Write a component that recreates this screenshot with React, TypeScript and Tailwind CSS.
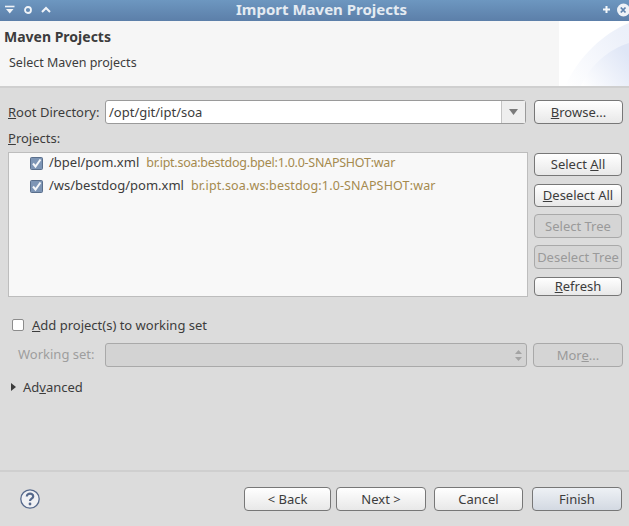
const font = "[font-family:'Noto_Sans',sans-serif]";

function Btn({ children, disabled, primary, className = "" }: { children: React.ReactNode; disabled?: boolean; primary?: boolean; className?: string }) {
  const look = disabled
    ? "border-[#a9a9a9] bg-[#d5d5d5] text-[#9a9a9a]"
    : primary
      ? "border-[#777] bg-gradient-to-b from-[#eef1f5] to-[#d3d9e2] text-[#3c3c3c]"
      : "border-[#777] bg-gradient-to-b from-white to-[#e8e8e8] text-[#3c3c3c]";
  return (
    <div className={`flex items-center justify-center rounded-[4px] border text-[13px] leading-none whitespace-nowrap ${look} ${className}`}>
      {children}
    </div>
  );
}

function Check() {
  return (
    <svg width="13" height="13" viewBox="0 0 13 13" className="shrink-0">
      <rect x="0.5" y="0.5" width="12" height="12" rx="1" fill="#7d95b5" stroke="#5a6f8c" />
      <path d="M3 6.5 L5.5 9.5 L10.5 2.5" fill="none" stroke="#f4f6f9" strokeWidth="2" />
    </svg>
  );
}

function ProjectRow({ path, id, idClass }: { path: string; id: string; idClass: string }) {
  return (
    <div className="flex h-[20px] items-center pl-[21px]">
      <Check />
      <span className="ml-[6px] text-[13px] text-[#3c3c3c]">{path}</span>
      <span className={`ml-[7px] text-[12.5px] text-[#a58a4e] ${idClass}`}>{id}</span>
    </div>
  );
}

export default function App() {
  return (
    <div className={`flex h-[526px] w-[629px] flex-col overflow-hidden bg-[#dcdcdc] ${font} text-[#3c3c3c]`}>
      {/* Title bar */}
      <div className="flex h-[21px] shrink-0 items-center bg-gradient-to-b from-[#6d97c0] to-[#5c7fa9] pb-[2px] pl-[5px]">
        <div className="flex items-center gap-[8px]">
          <svg width="10" height="10" viewBox="0 0 10 10"><path d="M0 1.5H9.5" stroke="#f0f4f8" strokeWidth="1.6" /><path d="M1 4 H8.5 L4.75 8.5Z" fill="#f0f4f8" /></svg>
          <svg width="10" height="10" viewBox="0 0 10 10"><circle cx="5" cy="5" r="3" fill="none" stroke="#f0f4f8" strokeWidth="1.8" /></svg>
          <svg width="10" height="10" viewBox="0 0 10 10"><path d="M1 7 L5 3 L9 7" fill="none" stroke="#f0f4f8" strokeWidth="2" /></svg>
        </div>
        <span className="ml-[185px] text-[15px] font-bold text-[#e4ebf2]">Import Maven Projects</span>
        <div className="ml-auto flex items-center gap-[6px]">
          <svg width="9" height="9" viewBox="0 0 9 9"><path d="M4.5 1V8M1 4.5H8" stroke="#f4f7fa" strokeWidth="2" /></svg>
          <svg width="12" height="14" viewBox="0 0 12 14"><circle cx="6.5" cy="7" r="6.5" fill="#eef2f7" /><path d="M3.8 4.5 L8.5 9.5 M8.5 4.5 L3.8 9.5" stroke="#5f83ad" strokeWidth="1.8" /></svg>
        </div>
      </div>

      {/* Wizard header */}
      <div className="flex h-[67px] shrink-0 border-b-2 border-[#cfcfcf] bg-[#f6f6f6]">
        <div className="flex-1 pl-[4px]">
          <div className="mt-[7px] text-[14px] font-bold leading-[18px] text-[#3c3c3c]">Maven Projects</div>
          <div className="mt-[8px] pl-[5px] text-[12.5px] leading-[18px]">Select Maven projects</div>
        </div>
        <svg width="70" height="65" viewBox="0 0 70 65" className="shrink-0 bg-white">
          <defs>
            <linearGradient id="w" x1="0" y1="1" x2="1" y2="0.3">
              <stop offset="0" stopColor="#ffffff" />
              <stop offset="1" stopColor="#dfe6f6" />
            </linearGradient>
          </defs>
          <path d="M6 65 C20 35 45 12 70 2 V65Z" fill="url(#w)" opacity="0.6" />
          <path d="M22 65 C30 45 50 28 70 22 V65Z" fill="url(#w)" />
        </svg>
      </div>

      {/* Root directory */}
      <div className="mt-[12px] flex h-[24px] shrink-0 items-center pl-[8px] pr-[6px]">
        <span className="w-[97px] pt-[2px] text-[13px]"><span className="underline">R</span>oot Directory:</span>
        <div className="flex h-full w-[421px] rounded-[3px] border border-[#9a9a9a] bg-white">
          <div className="flex flex-1 items-center pl-[3px] pt-[2px] text-[13px]">/opt/git/ipt/soa</div>
          <div className="flex w-[24px] items-center justify-center border-l border-[#c4c4c4] bg-[#eeeeee]">
            <svg width="9" height="6" viewBox="0 0 9 6"><path d="M0 0H9L4.5 6Z" fill="#7a7a7a" /></svg>
          </div>
        </div>
        <Btn className="ml-[8px] h-full w-[89px]"><span><span className="underline">B</span>rowse...</span></Btn>
      </div>

      <div className="mt-[4px] h-[20px] shrink-0 pl-[8px] text-[13px] leading-[20px]"><span className="underline">P</span>rojects:</div>

      {/* Projects */}
      <div className="mt-[4px] flex h-[145px] shrink-0 pl-[8px] pr-[6px]">
        <div className="flex h-full w-[520px] flex-col gap-[3px] border border-[#bdbdbd] bg-[#f8f8f8]">
          <ProjectRow path="/bpel/pom.xml" id="br.ipt.soa:bestdog.bpel:1.0.0-SNAPSHOT:war" idClass="tracking-[-0.25px]" />
          <ProjectRow path="/ws/bestdog/pom.xml" id="br.ipt.soa.ws:bestdog:1.0-SNAPSHOT:war" idClass="tracking-[0.15px]" />
        </div>
        <div className="ml-[6px] flex w-[88px] flex-col pt-[1px]">
          <Btn className="h-[23px]"><span>Select <span className="underline">A</span>ll</span></Btn>
          <Btn className="mt-[8px] h-[23px]"><span><span className="underline">D</span>eselect All</span></Btn>
          <Btn disabled className="mt-[7px] h-[24px]">Select Tree</Btn>
          <Btn disabled className="mt-[7px] h-[24px] text-[12.5px]">Deselect Tree</Btn>
          <Btn className="mt-[8px] h-[19px]"><span><span className="underline">R</span>efresh</span></Btn>
        </div>
      </div>

      {/* Working set */}
      <div className="mt-[20px] flex h-[16px] shrink-0 items-center pl-[12px]">
        <div className="h-[12px] w-[12px] rounded-[2px] border border-[#8c8c8c] bg-white" />
        <span className="ml-[8px] pt-[2px] text-[13px]"><span className="underline">A</span>dd project(s) to working set</span>
      </div>
      <div className="mt-[10px] flex h-[24px] shrink-0 items-center pl-[18px] pr-[6px]">
        <span className="w-[87px] text-[13px] text-[#9e9e9e]">Working set:</span>
        <div className="flex h-full w-[422px] items-center justify-end rounded-[3px] border border-[#a9a9a9] bg-[#d3d3d3] pr-[4px]">
          <svg width="7" height="11" viewBox="0 0 7 11"><path d="M3.5 0 L7 4 H0Z M3.5 11 L7 7 H0Z" fill="#a3a3a3" /></svg>
        </div>
        <Btn disabled className="ml-[6px] h-full w-[90px]"><span>Mor<span className="underline">e</span>...</span></Btn>
      </div>

      <div className="mt-[11px] flex h-[18px] shrink-0 items-center pl-[11px]">
        <svg width="5" height="8" viewBox="0 0 5 8"><path d="M0 0 L5 4 L0 8Z" fill="#3c3c3c" /></svg>
        <span className="ml-[7px] pt-[2px] text-[13px]">Ad<span className="underline">v</span>anced</span>
      </div>

      {/* Footer */}
      <div className="mt-[74px] h-[2px] shrink-0 bg-[#cfcfcf]" />
      <div className="mt-[15px] flex h-[24px] shrink-0 items-center pl-[20px] pr-[7px]">
        <svg width="20" height="20" viewBox="0 0 20 20">
          <circle cx="10" cy="10" r="9.2" fill="#f0f1f4" stroke="#56698c" strokeWidth="1.3" />
          <path d="M6.8 7.6 C6.8 3.6 13.4 3.8 13.2 7.6 C13.1 9.8 10 9.6 10 12" fill="none" stroke="#56698c" strokeWidth="2.2" />
          <circle cx="10" cy="15" r="1.4" fill="#56698c" />
        </svg>
        <Btn className="ml-[204px] h-full w-[87px]">&lt; Back</Btn>
        <Btn className="ml-[5px] h-full w-[90px]">Next &gt;</Btn>
        <Btn className="ml-[8px] h-full w-[89px]">Cancel</Btn>
        <Btn primary className="ml-[9px] h-full w-[90px]">Finish</Btn>
      </div>
    </div>
  );
}
